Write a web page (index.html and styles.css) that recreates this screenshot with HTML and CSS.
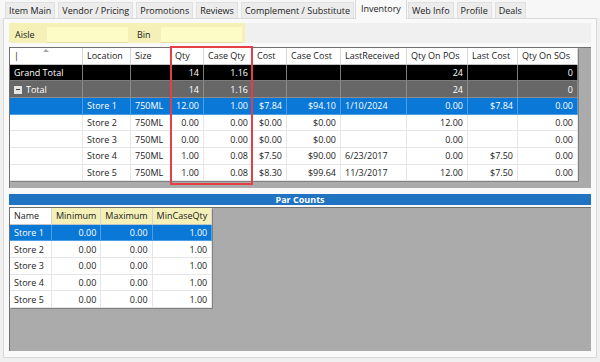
FILE: index.html
```html
<!DOCTYPE html>
<html lang="en">
<head>
  <meta charset="UTF-8">
  <title>Item - Inventory</title>
  <link rel="stylesheet" href="styles.css">
</head>
<body>
  <div class="tabs">
    <div class="tab">Item Main</div>
    <div class="tab">Vendor / Pricing</div>
    <div class="tab">Promotions</div>
    <div class="tab">Reviews</div>
    <div class="tab">Complement / Substitute</div>
    <div class="tab active">Inventory</div>
    <div class="tab">Web Info</div>
    <div class="tab">Profile</div>
    <div class="tab">Deals</div>
  </div>

  <div class="page">
    <div class="filter-row">
      <div class="filters">
        <label class="aisle-label">Aisle</label>
        <input class="field" type="text">
        <label class="bin-label">Bin</label>
        <input class="field" type="text">
      </div>
    </div>

    <div class="grid main-grid">
      <table>
        <colgroup>
          <col style="width:73px"><col style="width:48px"><col style="width:40px"><col style="width:33px">
          <col style="width:49px"><col style="width:34px"><col style="width:54px"><col style="width:66px">
          <col style="width:61px"><col style="width:50px"><col style="width:60px">
        </colgroup>
        <tr class="head">
          <th class="sort-col">|<span class="sort-arrow"></span></th>
          <th>Location</th><th>Size</th><th>Qty</th><th>Case Qty</th><th>Cost</th><th>Case Cost</th>
          <th>LastReceived</th><th>Qty On POs</th><th>Last Cost</th><th>Qty On SOs</th>
        </tr>
        <tr class="grand">
          <td>Grand Total</td><td></td><td></td><td class="num">14</td><td class="num">1.16</td><td></td><td></td>
          <td></td><td class="num">24</td><td></td><td class="num">0</td>
        </tr>
        <tr class="total">
          <td><span class="expander"></span>Total</td><td></td><td></td><td class="num">14</td><td class="num">1.16</td><td></td><td></td>
          <td></td><td class="num">24</td><td></td><td class="num">0</td>
        </tr>
        <tr class="selected">
          <td></td><td>Store 1</td><td>750ML</td><td class="num">12.00</td><td class="num">1.00</td><td class="num">$7.84</td><td class="num">$94.10</td>
          <td>1/10/2024</td><td class="num">0.00</td><td class="num">$7.84</td><td class="num">0.00</td>
        </tr>
        <tr>
          <td></td><td>Store 2</td><td>750ML</td><td class="num">0.00</td><td class="num">0.00</td><td class="num">$0.00</td><td class="num">$0.00</td>
          <td></td><td class="num">12.00</td><td></td><td class="num">0.00</td>
        </tr>
        <tr>
          <td></td><td>Store 3</td><td>750ML</td><td class="num">0.00</td><td class="num">0.00</td><td class="num">$0.00</td><td class="num">$0.00</td>
          <td></td><td class="num">0.00</td><td></td><td class="num">0.00</td>
        </tr>
        <tr>
          <td></td><td>Store 4</td><td>750ML</td><td class="num">1.00</td><td class="num">0.08</td><td class="num">$7.50</td><td class="num">$90.00</td>
          <td>6/23/2017</td><td class="num">0.00</td><td class="num">$7.50</td><td class="num">0.00</td>
        </tr>
        <tr>
          <td></td><td>Store 5</td><td>750ML</td><td class="num">1.00</td><td class="num">0.08</td><td class="num">$8.30</td><td class="num">$99.64</td>
          <td>11/3/2017</td><td class="num">12.00</td><td class="num">$7.50</td><td class="num">0.00</td>
        </tr>
      </table>
      <div class="highlight"></div>
    </div>

    <div class="section-bar">Par Counts</div>

    <div class="grid par-grid">
      <table>
        <colgroup>
          <col style="width:42px"><col style="width:45px"><col style="width:48px"><col style="width:59px">
        </colgroup>
        <tr class="head">
          <th>Name</th><th class="editable">Minimum</th><th class="editable">Maximum</th><th class="editable">MinCaseQty</th>
        </tr>
        <tr class="selected">
          <td>Store 1</td><td class="num">0.00</td><td class="num">0.00</td><td class="num">1.00</td>
        </tr>
        <tr>
          <td>Store 2</td><td class="num">0.00</td><td class="num">0.00</td><td class="num">1.00</td>
        </tr>
        <tr>
          <td>Store 3</td><td class="num">0.00</td><td class="num">0.00</td><td class="num">1.00</td>
        </tr>
        <tr>
          <td>Store 4</td><td class="num">0.00</td><td class="num">0.00</td><td class="num">1.00</td>
        </tr>
        <tr>
          <td>Store 5</td><td class="num">0.00</td><td class="num">0.00</td><td class="num">1.00</td>
        </tr>
      </table>
    </div>
  </div>
</body>
</html>
```

FILE: styles.css
```css
body {
  margin: 0;
  font-family: "Open Sans", "Noto Sans", sans-serif;
  font-size: 9px;
  color: #1b1b1b;
  background: #f0f0f0;
}

/* tab strip */
.tabs {
  display: flex;
  align-items: flex-end;
  height: 18px;
  padding-left: 5px;
  background: #f7f7f7;
}

.tab {
  height: 16px;
  line-height: 15px;
  padding: 0 3px;
  margin-right: 3px;
  background: #ececec;
  border: 1px solid #e0e0e0;
  border-bottom: none;
  box-sizing: border-box;
  white-space: nowrap;
}

.tab.active {
  position: relative;
  z-index: 1;
  height: 20px;
  line-height: 17px;
  margin: 0 1px -1px -2px;
  padding: 0 5px;
  background: #f9f9f9;
  border-color: #d9d9d9;
}

/* tab page */
.page {
  margin: 0 3px;
  padding: 4px 5px 6px;
  background: #f9f9f9;
  border: 1px solid #d9d9d9;
}

.filter-row {
  background: #f0f0f0;
}

.filters {
  display: flex;
  align-items: flex-end;
  width: 236px;
  height: 20px;
  padding-left: 6px;
  box-sizing: border-box;
  background: #f4f0b7;
}

.filters label {
  line-height: 16px;
}

.aisle-label {
  width: 32px;
}

.bin-label {
  width: 24px;
  margin-left: 9px;
}

.field {
  width: 81px;
  height: 16px;
  margin: 0;
  padding: 0;
  border: none;
  border-bottom: 1px solid #e2dea2;
  box-sizing: border-box;
  background: #fdfcc6;
}

/* grids */
.grid {
  position: relative;
  background: #ababab;
  border-top: 1px solid #707070;
  border-left: 1px solid #707070;
}

.main-grid {
  height: 140px;
  margin-top: 4px;
}

.par-grid {
  height: 143px;
  margin-top: 2px;
}

table {
  border-collapse: separate;
  border-spacing: 0;
  table-layout: fixed;
  background: #fff;
  box-shadow: 1px 1px 0 #808080;
}

th,
td {
  height: 15.67px;
  padding: 0 4px;
  white-space: nowrap;
  overflow: hidden;
  border-right: 1px solid #e6e6e6;
  border-bottom: 1px solid #e6e6e6;
  box-sizing: content-box;
  line-height: 15px;
}

th {
  font-weight: normal;
  text-align: left;
  background: #fff;
  border-right-color: #d6d6d6;
  border-bottom-color: #c4c4c4;
}

th.editable {
  background: #f4f0b7;
}

.sort-col {
  position: relative;
}

.sort-arrow {
  position: absolute;
  top: 1px;
  left: 33px;
  border-left: 3px solid transparent;
  border-right: 3px solid transparent;
  border-bottom: 3px solid #a8a8a8;
}

.num {
  text-align: right;
}

.grand td {
  background: #000;
  color: #fff;
  border-color: #7c7c7c;
}

.total td {
  background: #676767;
  color: #fff;
  border-color: #8c8c8c;
}

.selected td {
  background: #0a78d7;
  color: #fff;
  border-color: #4f9de2;
}

.expander {
  display: inline-block;
  width: 8px;
  height: 8px;
  margin: 0 4px 0 0;
  vertical-align: -1px;
  background: linear-gradient(#3a3a3a, #3a3a3a) center / 4px 1px no-repeat, #e4e4e4;
}

/* annotation box around the qty columns */
.highlight {
  position: absolute;
  left: 160px;
  top: -2px;
  width: 83px;
  height: 139px;
  border: 2px solid #e63e45;
  box-sizing: border-box;
}

.section-bar {
  height: 11px;
  line-height: 11px;
  margin-top: 6px;
  background: #1f73c0;
  color: #fff;
  font-weight: bold;
  text-align: center;
}
```
